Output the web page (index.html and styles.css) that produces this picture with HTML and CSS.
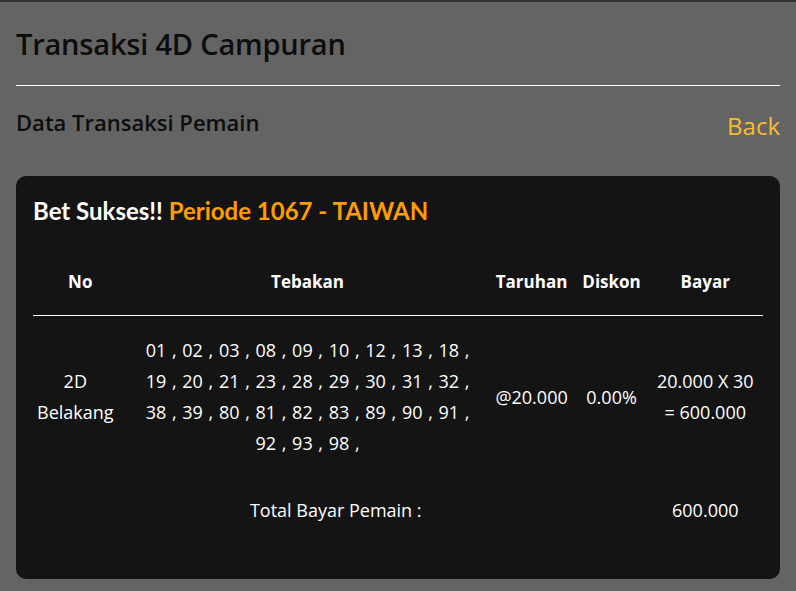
FILE: index.html
```html
<!DOCTYPE html>
<html lang="id">
<head>
  <meta charset="UTF-8">
  <title>Transaksi 4D Campuran</title>
  <meta name="viewport" content="width=device-width,initial-scale=1">
  <link rel="stylesheet" href="styles.css">
</head>
<body>
  <div class="halaman">
    <h1 class="judul">Transaksi 4D Campuran</h1>
    <hr class="garis">
    <div class="sub-baris">
      <h3 class="sub-judul">Data Transaksi Pemain</h3>
      <a class="kembali" href="#">Back</a>
    </div>

    <div class="kartu">
      <h2 class="status">Bet Sukses!! <span class="periode">Periode 1067 - TAIWAN</span></h2>
      <table class="tabel">
        <thead>
          <tr>
            <th class="k-no">No</th>
            <th class="k-tebakan">Tebakan</th>
            <th class="k-taruhan">Taruhan</th>
            <th class="k-diskon">Diskon</th>
            <th class="k-bayar">Bayar</th>
          </tr>
        </thead>
        <tbody>
          <tr class="baris-data">
            <td class="jenis">2D<br>Belakang</td>
            <td class="tebakan">01&nbsp;, 02&nbsp;, 03&nbsp;, 08&nbsp;, 09&nbsp;, 10&nbsp;, 12&nbsp;, 13&nbsp;, 18&nbsp;, 19&nbsp;, 20&nbsp;, 21&nbsp;, 23&nbsp;, 28&nbsp;, 29&nbsp;, 30&nbsp;, 31&nbsp;, 32&nbsp;, 38&nbsp;, 39&nbsp;, 80&nbsp;, 81&nbsp;, 82&nbsp;, 83&nbsp;, 89&nbsp;, 90&nbsp;, 91&nbsp;, 92&nbsp;, 93&nbsp;, 98&nbsp;,</td>
            <td>@20.000</td>
            <td>0.00%</td>
            <td>20.000 X 30<br>= 600.000</td>
          </tr>
          <tr class="baris-total">
            <td></td>
            <td class="label-total">Total Bayar Pemain :</td>
            <td></td>
            <td></td>
            <td>600.000</td>
          </tr>
        </tbody>
      </table>
    </div>
  </div>
</body>
</html>
```

FILE: styles.css
```css
:root {
  --abu-latar: #646464;
  --hitam-kartu: #141414;
  --kuning: #f9bb2e;
  --oranye: #ff9d00;
}
html, body {
  margin: 0;
  padding: 0;
  background: var(--abu-latar);
  font-family: "Open Sans", "Noto Sans", Arial, sans-serif;
  color: #fff;
}
body {
  border-top: 2px solid #333;
}
.halaman {
  padding: 0 16px 13px 16px;
}
.judul {
  margin: 0;
  padding-top: 22px;
  font-size: 29px;
  font-weight: 600;
  line-height: 40px;
  letter-spacing: -0.2px;
  color: #0d0d0d;
}
.garis {
  margin: 21px 0 0 0;
  border: none;
  border-top: 1px solid #fff;
}
.sub-baris {
  display: flex;
  justify-content: space-between;
  align-items: flex-start;
  height: 90px;
}
.sub-judul {
  margin: 21px 0 0 0;
  font-size: 22px;
  font-weight: 600;
  line-height: 30px;
  color: #0d0d0d;
}
.kembali {
  margin-top: 25px;
  font-size: 24px;
  line-height: 30px;
  color: var(--kuning);
  text-decoration: none;
}
.kartu {
  background: var(--hitam-kartu);
  border-radius: 10px;
  padding: 20px 17px 58px 17px;
}
.status {
  margin: 0;
  font-family: Lato, "Open Sans", sans-serif;
  font-size: 24px;
  font-weight: 700;
  line-height: 30px;
  color: #fff;
}
.periode {
  color: var(--oranye);
}
.tabel {
  width: 100%;
  margin-top: 23px;
  border-collapse: collapse;
  font-size: 18px;
  text-align: center;
}
.tabel th {
  font-size: 17px;
  font-weight: 700;
  height: 65px;
  padding: 0 4px 1px 4px;
  border-bottom: 1px solid #fff;
}
.k-no { width: 86px; }
.k-tebakan { width: 352px; }
.k-taruhan { width: 80px; }
.k-diskon { width: 64px; }
.baris-data td {
  padding: 19px 4px 18px 4px;
  line-height: 31px;
  vertical-align: middle;
}
.baris-data .jenis {
  padding-right: 14px;
}
.tebakan {
  word-spacing: 1px;
}
.baris-total td {
  padding: 22px 4px 0 4px;
  line-height: 22px;
}
.label-total {
  text-align: right !important;
  padding-right: 66px !important;
}
```
